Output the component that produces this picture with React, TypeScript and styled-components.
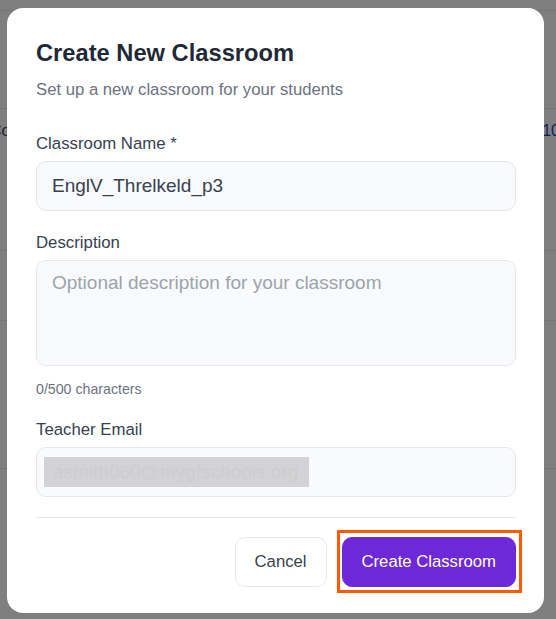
import React from "react";
import styled, { createGlobalStyle } from "styled-components";

const Global = createGlobalStyle`
  html, body { margin: 0; padding: 0; background: #ffffff; }
  body { font-family: "Liberation Sans", Arial, sans-serif; overflow: hidden; }
  * { box-sizing: border-box; }
`;

const Page = styled.div`
  position: relative;
  width: 556px;
  height: 619px;
  overflow: hidden;
  background: #ffffff;
`;

const BgRow = styled.div<{ $h: number }>`
  height: ${(p) => p.$h}px;
  border-bottom: 1px solid #e6e8eb;
  display: flex;
  align-items: flex-start;
  justify-content: space-between;
  font-size: 16px;
  color: #1f2937;
`;

const BgCell = styled.span<{ $shift: number }>`
  margin-top: 13px;
  margin-left: ${(p) => p.$shift}px;
  margin-right: ${(p) => (p.$shift < 0 ? 0 : -4)}px;
  color: ${(p) => (p.$shift < 0 ? "#374151" : "#1e40af")};
`;

const Overlay = styled.div`
  position: absolute;
  inset: 0;
  background: rgba(0, 0, 0, 0.5);
  padding: 8px 12px 0 7px;
`;

const Modal = styled.div`
  width: 537px;
  background: #ffffff;
  border-radius: 16px;
  padding: 29px 28px 26px 29px;
  display: flex;
  flex-direction: column;
`;

const Title = styled.h2`
  margin: 0;
  font-size: 23.7px;
  line-height: 32px;
  font-weight: 700;
  color: #1f2937;
`;

const Subtitle = styled.p`
  margin: 9px 0 0;
  font-size: 16.7px;
  line-height: 24px;
  color: #6b7280;
`;

const Field = styled.div<{ $top: number }>`
  display: flex;
  flex-direction: column;
  margin-top: ${(p) => p.$top}px;
`;

const Label = styled.label`
  font-size: 16.8px;
  line-height: 24px;
  color: #374151;
  margin-bottom: 5px;
`;

const InputBox = styled.div<{ $h: number; $top?: boolean }>`
  height: ${(p) => p.$h}px;
  border: 1px solid #e5e7eb;
  border-radius: 10px;
  background: #f9fafb;
  padding: ${(p) => (p.$top ? "8px 15px" : "0 15px")};
  display: flex;
  align-items: ${(p) => (p.$top ? "flex-start" : "center")};
  font-size: 19px;
  line-height: 28px;
  color: #374151;
`;

const Placeholder = styled.span`
  color: #9ca3af;
`;

const Redacted = styled.span`
  margin-left: -8px;
  padding: 0 11px 0 9px;
  height: 30px;
  line-height: 30px;
  background: #d3d3d5;
  color: #cdcdcf;
`;

const Counter = styled.div`
  margin-top: 13px;
  font-size: 14.2px;
  line-height: 20px;
  color: #6b7280;
`;

const Divider = styled.hr`
  margin: 20px 0 0;
  border: none;
  border-top: 1px solid #e5e7eb;
`;

const Actions = styled.div`
  display: flex;
  justify-content: flex-end;
  align-items: center;
  gap: 16px;
  margin-top: 19px;
`;

const Highlight = styled.div`
  display: flex;
  margin: -7px -6px -6px -6px;
  padding: 4px 3px 3px 2px;
  border: 3px solid #ff5a00;
`;

const Button = styled.button<{ $primary?: boolean }>`
  height: 50px;
  padding: 0 19px;
  border-radius: 10px;
  font-family: "Liberation Sans", Arial, sans-serif;
  font-size: 16.7px;
  border: 1px solid ${(p) => (p.$primary ? "#6d28d9" : "#e5e7eb")};
  background: ${(p) => (p.$primary ? "#6d28d9" : "#ffffff")};
  color: ${(p) => (p.$primary ? "#ffffff" : "#374151")};
  outline: none;
`;

export default function App() {
  return (
    <>
      <Global />
      <Page>
        <BgRow $h={11} />
        <BgRow $h={98} />
        <BgRow $h={142}>
          <BgCell $shift={-10}>Co</BgCell>
          <BgCell $shift={0}>10</BgCell>
        </BgRow>
        <BgRow $h={70} />
        <BgRow $h={148} />
        <Overlay>
          <Modal>
            <Title>Create New Classroom</Title>
            <Subtitle>Set up a new classroom for your students</Subtitle>

            <Field $top={30}>
              <Label>Classroom Name *</Label>
              <InputBox $h={50}>EnglV_Threlkeld_p3</InputBox>
            </Field>

            <Field $top={20}>
              <Label>Description</Label>
              <InputBox $h={106} $top>
                <Placeholder>Optional description for your classroom</Placeholder>
              </InputBox>
              <Counter>0/500 characters</Counter>
            </Field>

            <Field $top={19}>
              <Label>Teacher Email</Label>
              <InputBox $h={50}>
                <Redacted>asmith060@mygfschools.org</Redacted>
              </InputBox>
            </Field>

            <Divider />

            <Actions>
              <Button>Cancel</Button>
              <Highlight>
                <Button $primary>Create Classroom</Button>
              </Highlight>
            </Actions>
          </Modal>
        </Overlay>
      </Page>
    </>
  );
}
